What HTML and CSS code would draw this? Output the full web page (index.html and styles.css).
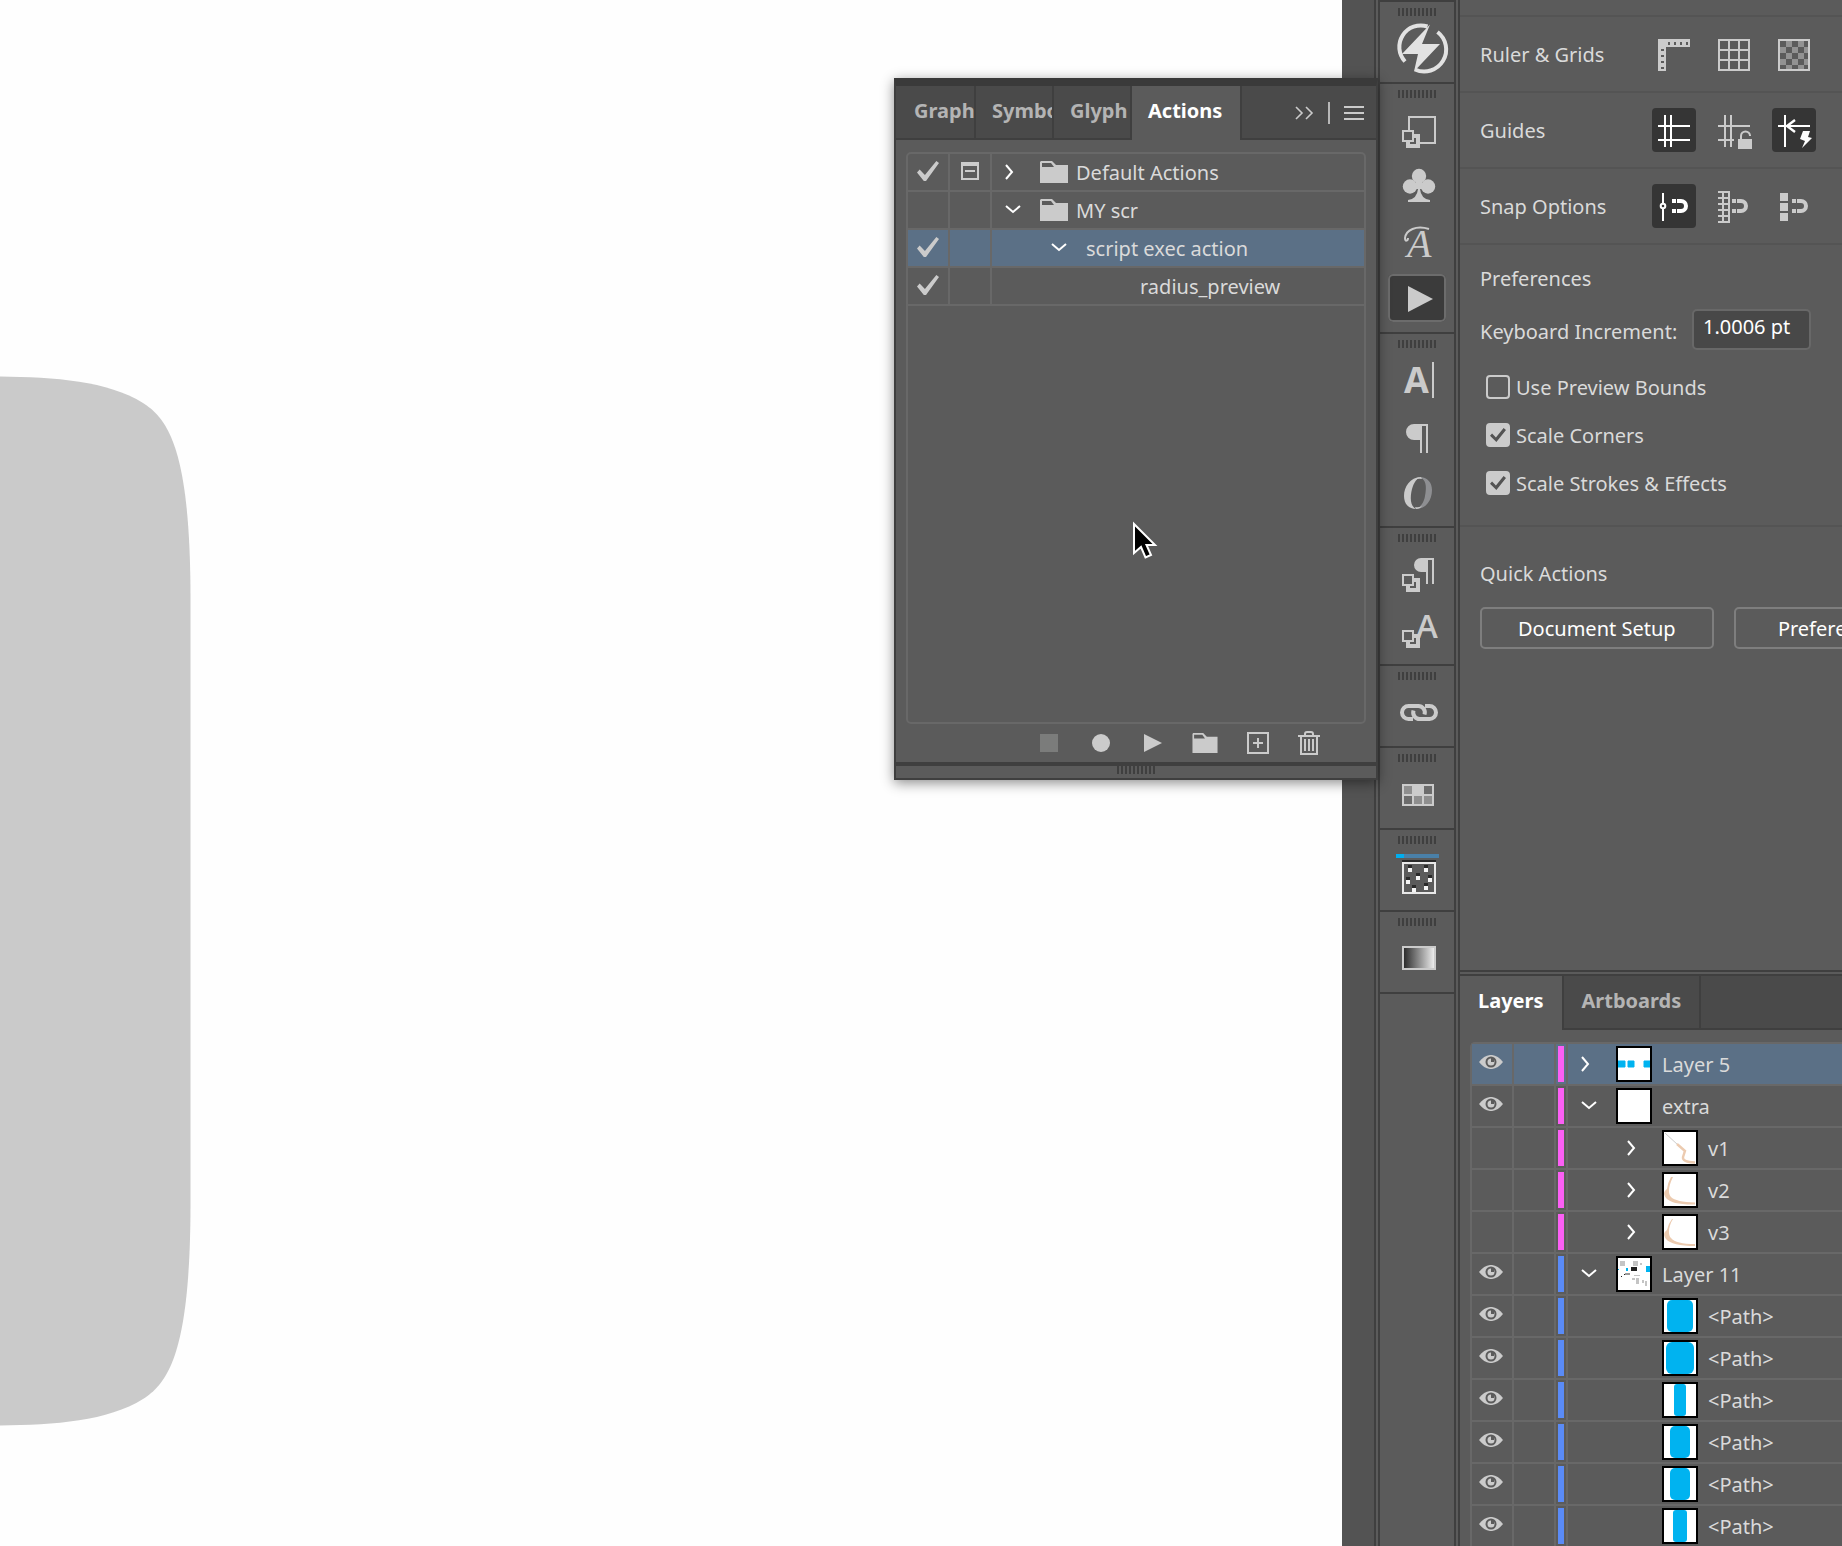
FILE: index.html
```html
<!DOCTYPE html>
<html lang="en">
<head>
  <meta charset="UTF-8" />
  <meta name="viewport" content="width=device-width, initial-scale=1.0"/>
  <title>Actions</title>
  <link rel="stylesheet" href="styles.css">
</head>
<body>

<!-- shared icons -->
<svg class="sprite" aria-hidden="true">
  <symbol id="right" viewBox="0 0 48 36"><path d="M14 11l6 7-6 7" fill="none" stroke="#fff" stroke-width="2"/></symbol>
  <symbol id="down" viewBox="0 0 48 36"><path d="M14 14l7 6 7-6" fill="none" stroke="#fff" stroke-width="2"/></symbol>
  <symbol id="folder" viewBox="0 0 28 22"><path fill-rule="evenodd" d="M1 0H12L16 4H28V22H0V1zM2 2V6H14L11 2z"/></symbol>
  <symbol id="eye" viewBox="0 0 24 14">
    <path d="M0 7C7-2.4 17-2.4 24 7C17 16.400 7 16.400 0 7z"/>
    <circle cx="12" cy="7" r="5.500" fill="#5b5b5b"/><circle cx="12" cy="7" r="3.500"/><path d="M12 7V3h3v4z" fill="#5b5b5b"/>
  </symbol>
  <symbol id="grip" viewBox="0 0 38 8"><path d="M1 0v8M5 0v8M9 0v8M13 0v8M17 0v8M21 0v8M25 0v8M29 0v8M33 0v8M37 0v8" stroke="#3f3f3f" stroke-width="2"/></symbol>
  <symbol id="squares" viewBox="0 0 58 48">
    <rect x="20" y="30" width="10" height="10" fill="#5b5b5b" stroke="#cbcbcb" stroke-width="4"/>
    <rect x="15" y="25" width="10" height="10" fill="#5b5b5b" stroke="#cbcbcb" stroke-width="2"/>
  </symbol>
  <symbol id="magnet" viewBox="0 0 44 44">
    <path d="M25 17h4a5 5 0 0 1 0 10h-4" fill="none" stroke="currentColor" stroke-width="4"/>
    <path d="M20 15h4v4h-4zM20 25h4v4h-4z"/>
  </symbol>
</svg>

<div class="app">

  <main class="canvas">
    <svg class="artwork" width="192" height="1546" aria-hidden="true">
      <path d="M0 376.500C55 377 108 381 143 403C170 420 190.500 455 190.500 600V1202C190.500 1347 170 1382 143 1399C108 1421 55 1425 0 1425.500z" fill="#cacaca"/>
    </svg>
  </main>
  <div class="gutter"></div>
  <div class="splitter"></div>

  <nav class="dock">
    <div class="dock-group">
      <svg class="grip"><use href="#grip"/></svg>
      <button aria-label="Plugin"><svg viewBox="0 0 58 48">
        <path d="M17 37.500A21.500 21.500 0 0 1 39.500 2.500M27 45.500A22 22 0 0 0 49.500 8" fill="none" stroke="#e2e2e2" stroke-width="4"/>
        <path d="M42 .5L34 20H52L26 47.500 30 30H14z" fill="#e2e2e2"/>
      </svg></button>
    </div>
    <div class="dock-group">
      <svg class="grip"><use href="#grip"/></svg>
      <button aria-label="Graphic Styles"><svg viewBox="0 0 58 48">
        <path d="M21 11h26v26H21z" class="line"/>
        <use href="#squares"/>
      </svg></button>
      <button aria-label="Symbols"><svg viewBox="0 0 58 48">
        <circle cx="31" cy="14" r="7.200"/><circle cx="22" cy="24.500" r="7.200"/><circle cx="40" cy="24.500" r="7.200"/>
        <path d="M28 19h6v8h-2q1 10 10 11v2H20v-2q9-1 10-11h-2z"/>
      </svg></button>
      <button aria-label="Glyphs"><svg viewBox="0 0 58 48">
        <text x="19" y="39" class="glyph-script">A</text>
        <path d="M41 11C28 7 18 12 17 20C17 24 20 23 20 20" class="line"/>
      </svg></button>
      <button class="active" aria-label="Actions"><svg viewBox="0 0 58 48"><path d="M20 12l25 13-25 13z"/></svg></button>
    </div>
    <div class="dock-group">
      <svg class="grip"><use href="#grip"/></svg>
      <button aria-label="Character"><svg viewBox="0 0 58 48">
        <text x="16" y="37" class="glyph-bold">A</text><path d="M44 6h2v36h-2z"/>
      </svg></button>
      <button aria-label="Paragraph"><svg viewBox="0 0 58 48">
        <path d="M26 12H40V41H38V14H34V41H32V28H26A8 8 0 0 1 26 12z"/>
      </svg></button>
      <button aria-label="OpenType"><svg viewBox="0 0 58 48">
        <path d="M33 9C22 9 16 19 16 28C16 36 21 41 28 41C22 38 22 29 24 21C26 14 29 10 33 9z"/>
        <path d="M31 9C40 9 44 15 44 22C44 32 38 41 28 41C33 39 36 34 37 28C39 18 38 11 31 9z" fill="#8e8f92"/>
        <path d="M33 9q-4 0-6 3 3-2 7-1zM28 41q4 0 6-3-3 2-7 1z"/>
      </svg></button>
    </div>
    <div class="dock-group">
      <svg class="grip"><use href="#grip"/></svg>
      <button aria-label="Paragraph Styles"><svg viewBox="0 0 58 48">
        <path d="M33 8H46V34H44V10H40V34H38V22H33A7 7 0 0 1 33 8z"/><use href="#squares"/>
      </svg></button>
      <button aria-label="Character Styles"><svg viewBox="0 0 58 48">
        <text x="28" y="32" class="glyph-regular">A</text><use href="#squares"/>
      </svg></button>
    </div>
    <div class="dock-group">
      <svg class="grip"><use href="#grip"/></svg>
      <button aria-label="Links"><svg viewBox="0 0 58 48">
        <path d="M25 31H20.500a6.500 6.500 0 0 1 0-13H30a6.500 6.500 0 0 1 6.500 8.500M37 18H41.500a6.500 6.500 0 0 1 0 13H32a6.500 6.500 0 0 1-6.500-8.500" class="line thick"/>
      </svg></button>
    </div>
    <div class="dock-group">
      <svg class="grip"><use href="#grip"/></svg>
      <button aria-label="Swatches"><svg viewBox="0 0 58 48">
        <rect x="14" y="14" width="32" height="22"/>
        <path d="M16 16h8v8h-8zM26 26h8v8h-8zM36 26h8v8h-8z" fill="#8e8e8e"/>
        <path d="M36 16h8v8h-8zM16 26h8v8h-8z" fill="#6c6c6c"/>
      </svg></button>
    </div>
    <div class="dock-group">
      <svg class="grip"><use href="#grip"/></svg>
      <button aria-label="Scatter"><svg viewBox="0 0 58 48">
        <path d="M8 2h43v4H8z" fill="#4a80a8"/><path d="M8 2h8v4H8z" fill="#00aeef"/>
        <path d="M14 8h34v2H14zM20 13h4v3h-4zM36 13h4v3h-4zM28 21h4v3h-4zM18 25h4v3h-4zM40 23h4v3h-4zM24 33h4v3h-4zM36 31h4v3h-4z" fill="#2a2a2a"/>
        <rect x="15" y="11" width="32" height="30" fill="none" stroke="#e8e8e8" stroke-width="2"/>
        <path d="M20 16h4v4h-4zM36 16h4v4h-4zM28 24h4v4h-4zM18 28h4v4h-4zM40 26h4v4h-4zM24 36h4v4h-4zM36 34h4v4h-4z" fill="#f4f4f4"/>
      </svg></button>
    </div>
    <div class="dock-group">
      <svg class="grip"><use href="#grip"/></svg>
      <button aria-label="Gradient"><svg viewBox="0 0 58 48">
        <defs><linearGradient id="ramp"><stop offset="0" stop-color="#262626"/><stop offset="1" stop-color="#f2f2f2"/></linearGradient></defs>
        <rect x="15" y="13" width="32" height="22" fill="url(#ramp)" stroke="#cbcbcb" stroke-width="2"/>
      </svg></button>
    </div>
  </nav>
  <div class="splitter"></div>

  <aside class="sidebar">
    <section class="properties">
      <div class="prop-top"></div>
      <div class="prop-row">
        <span>Ruler &amp; Grids</span>
        <div class="tools">
          <button aria-label="Show rulers"><svg viewBox="0 0 44 44"><path fill-rule="evenodd" d="M6 7H38V15H14V39H6zM16 10v3h2v-3zM22 10v3h2v-3zM28 10v3h2v-3zM34 10v3h2v-3zM9 17v2h3v-2zM9 23v2h3v-2zM9 29v2h3v-2zM9 35v2h3v-2z"/></svg></button>
          <button aria-label="Show grid"><svg viewBox="0 0 44 44"><path d="M7 8h30v30H7zM17 8v30M27 8v30M7 18h30M7 28h30" class="line"/></svg></button>
          <button aria-label="Show transparency grid"><svg viewBox="0 0 44 44">
            <defs><pattern id="checks" x="8" y="9" width="12" height="12" patternUnits="userSpaceOnUse"><path d="M6 0h6v6H6zM0 6h6v6H0z" fill="#929292"/></pattern></defs>
            <rect x="7" y="8" width="30" height="30" fill="url(#checks)" stroke="#cbcbcb" stroke-width="2"/>
          </svg></button>
        </div>
      </div>
      <div class="prop-row">
        <span>Guides</span>
        <div class="tools">
          <button class="active" aria-label="Show guides"><svg viewBox="0 0 44 44"><path d="M12 7h2v32h-2zM18 7h2v32h-2zM6 17h32v2H6zM6 31h32v2H6z"/></svg></button>
          <button aria-label="Lock guides"><svg viewBox="0 0 44 44">
            <path d="M12 7h2v32h-2zM18 7h2v32h-2zM6 17h32v2H6zM6 31h16v2H6zM26 31h14v10H26z"/>
            <path d="M29 31v-3a4.500 4.500 0 0 1 9 0v-1" class="line"/>
          </svg></button>
          <button class="active" aria-label="Smart guides"><svg viewBox="0 0 44 44">
            <path d="M12 7h2v32h-2zM6 17h32v2H6zM31 23h7l-2 6 4 1-10 10 3-7-5-2z"/>
            <path d="M23 12l-8 6 8 6" fill="none" stroke="#fff" stroke-width="2.400"/>
          </svg></button>
        </div>
      </div>
      <div class="prop-row">
        <span>Snap Options</span>
        <div class="tools">
          <button class="active" aria-label="Snap to point"><svg viewBox="0 0 44 44"><path d="M10 9h2v10h-2zM10 25h2v12h-2z"/><circle cx="11" cy="22" r="2.300" fill="none" stroke="#fff" stroke-width="2"/><use href="#magnet"/></svg></button>
          <button aria-label="Snap to grid"><svg viewBox="0 0 44 44"><path d="M11 8v30M17 7v32M6 8h12M6 14h12M6 20h12M6 26h12M6 32h12M6 38h12" class="line"/><use href="#magnet"/></svg></button>
          <button aria-label="Snap to pixel"><svg viewBox="0 0 44 44"><path d="M8 9h8v8H8zM8 19h8v8H8zM8 29h8v8H8z"/><use href="#magnet"/></svg></button>
        </div>
      </div>

      <div class="preferences">
        <h2>Preferences</h2>
        <div class="increment">
          <label for="increment">Keyboard Increment:</label>
          <input type="text" id="increment" value="1.0006 pt">
        </div>
        <div class="checks">
          <label><input type="checkbox"> <span>Use Preview Bounds</span></label>
          <label><input type="checkbox" checked> <span>Scale Corners</span></label>
          <label><input type="checkbox" checked> <span>Scale Strokes &amp; Effects</span></label>
        </div>
      </div>

      <div class="quick">
        <h2>Quick Actions</h2>
        <div class="quick-buttons">
          <button>Document Setup</button>
          <button>Preferences</button>
        </div>
      </div>
    </section>

    <div class="splitter-h"></div>

    <section class="layers">
      <div class="tabs">
        <button class="tab active">Layers</button>
        <button class="tab">Artboards</button>
      </div>
      <div class="layer-list">
        <div class="layer selected">
          <button class="see" aria-label="Visibility"><svg><use href="#eye"/></svg></button><span class="lock"></span><span class="color pink"></span>
          <button class="toggle" aria-label="Expand"><svg><use href="#right"/></svg></button>
          <svg class="thumb" viewBox="0 0 32 32"><path d="M0 13h7v6H0zM10 13h6v6h-6zM26 13h6v6h-6z" fill="#00b3f0" stroke="#00b3f0" stroke-linejoin="round"/></svg>
          <span class="name">Layer 5</span>
        </div>
        <div class="layer">
          <button class="see" aria-label="Visibility"><svg><use href="#eye"/></svg></button><span class="lock"></span><span class="color pink"></span>
          <button class="toggle" aria-label="Collapse"><svg><use href="#down"/></svg></button>
          <svg class="thumb" viewBox="0 0 32 32"></svg>
          <span class="name">extra</span>
        </div>
        <div class="layer nested">
          <button class="see" aria-label="Visibility"></button><span class="lock"></span><span class="color pink"></span>
          <button class="toggle" aria-label="Expand"><svg><use href="#right"/></svg></button>
          <svg class="thumb" viewBox="0 0 32 32"><path d="M1 1l13 12" stroke="#ccc" fill="none"/><path d="M13 12l8 7-2 6q-1 5 12 5.500" stroke="#eccbb0" stroke-width="2.400" fill="none"/></svg>
          <span class="name">v1</span>
        </div>
        <div class="layer nested">
          <button class="see" aria-label="Visibility"></button><span class="lock"></span><span class="color pink"></span>
          <button class="toggle" aria-label="Expand"><svg><use href="#right"/></svg></button>
          <svg class="thumb" viewBox="0 0 32 32"><path d="M7 3H9C4 13 4 20 7 23Q12 28 31 28.500V30.500Q8 31 2 24C-1 20 0 17 3 15Q4 8 7 3z" fill="#eccbb0"/></svg>
          <span class="name">v2</span>
        </div>
        <div class="layer nested">
          <button class="see" aria-label="Visibility"></button><span class="lock"></span><span class="color pink"></span>
          <button class="toggle" aria-label="Expand"><svg><use href="#right"/></svg></button>
          <svg class="thumb" viewBox="0 0 32 32"><path d="M8 3H9C4 11 4 19 7 22Q12 28 31 28V30Q8 30 2 23C-1 19 0 16 3 14Q4 8 8 3z" fill="#eccbb0"/></svg>
          <span class="name">v3</span>
        </div>
        <div class="layer">
          <button class="see" aria-label="Visibility"><svg><use href="#eye"/></svg></button><span class="lock"></span><span class="color blue"></span>
          <button class="toggle" aria-label="Collapse"><svg><use href="#down"/></svg></button>
          <svg class="thumb" viewBox="0 0 32 32">
            <path d="M2 3h5v5H2zM15 3h5v5h-5zM22 5h2v2h-2zM14 20h3v2h-3zM18 20h3v6h-3zM24 22h2v3h-2zM27 23h2v5h-2zM16 17h6v1h-6z" fill="#c4c4c4"/>
            <path d="M13 9h6v4h-6zM6 16h2v1H6zM10 15h2v1h-2zM3 18h1v1H3z" fill="#222"/><path d="M28 8h4v6h-4zM8 10h2v3H8zM0 11h1v1H0z" fill="#00b3f0"/><path d="M7 15h5v2H7z" fill="#999"/>
          </svg>
          <span class="name">Layer 11</span>
        </div>
        <div class="layer nested">
          <button class="see" aria-label="Visibility"><svg><use href="#eye"/></svg></button><span class="lock"></span><span class="color blue"></span><span class="toggle"></span>
          <svg class="thumb" viewBox="0 0 32 32"><rect x="3" y="0" width="26" height="32" rx="5" fill="#00b3f0"/></svg>
          <span class="name">&lt;Path&gt;</span>
        </div>
        <div class="layer nested">
          <button class="see" aria-label="Visibility"><svg><use href="#eye"/></svg></button><span class="lock"></span><span class="color blue"></span><span class="toggle"></span>
          <svg class="thumb" viewBox="0 0 32 32"><rect x="2" y="0" width="28" height="32" rx="6" fill="#00b3f0"/></svg>
          <span class="name">&lt;Path&gt;</span>
        </div>
        <div class="layer nested">
          <button class="see" aria-label="Visibility"><svg><use href="#eye"/></svg></button><span class="lock"></span><span class="color blue"></span><span class="toggle"></span>
          <svg class="thumb" viewBox="0 0 32 32"><rect x="10" y="0" width="12" height="32" rx="3" fill="#00b3f0"/></svg>
          <span class="name">&lt;Path&gt;</span>
        </div>
        <div class="layer nested">
          <button class="see" aria-label="Visibility"><svg><use href="#eye"/></svg></button><span class="lock"></span><span class="color blue"></span><span class="toggle"></span>
          <svg class="thumb" viewBox="0 0 32 32"><rect x="6" y="0" width="20" height="32" rx="5" fill="#00b3f0"/></svg>
          <span class="name">&lt;Path&gt;</span>
        </div>
        <div class="layer nested">
          <button class="see" aria-label="Visibility"><svg><use href="#eye"/></svg></button><span class="lock"></span><span class="color blue"></span><span class="toggle"></span>
          <svg class="thumb" viewBox="0 0 32 32"><rect x="6" y="0" width="20" height="32" rx="5" fill="#00b3f0"/></svg>
          <span class="name">&lt;Path&gt;</span>
        </div>
        <div class="layer nested">
          <button class="see" aria-label="Visibility"><svg><use href="#eye"/></svg></button><span class="lock"></span><span class="color blue"></span><span class="toggle"></span>
          <svg class="thumb" viewBox="0 0 32 32"><rect x="9" y="0" width="14" height="32" rx="3" fill="#00b3f0"/></svg>
          <span class="name">&lt;Path&gt;</span>
        </div>
      </div>
    </section>
  </aside>

  <!-- floating panel -->
  <section class="panel">
    <div class="tabs">
      <button class="tab short first">Graph</button>
      <button class="tab short">Symbo</button>
      <button class="tab short">Glyph</button>
      <button class="tab active">Actions</button>
      <div class="panel-menu">
        <button aria-label="Collapse panel"><svg width="20" height="14" viewBox="0 0 20 14"><path d="M2 1l6 6-6 6M12 1l6 6-6 6" fill="none" stroke="#cbcbcb" stroke-width="1.600"/></svg></button>
        <span class="divider"></span>
        <button aria-label="Panel menu"><svg width="20" height="14" viewBox="0 0 20 14"><path d="M0 0h20v2H0zM0 6h20v2H0zM0 12h20v2H0z"/></svg></button>
      </div>
    </div>

    <div class="action-list">
      <div class="action">
        <label class="cell"><input type="checkbox" checked aria-label="Toggle Default Actions"></label>
        <button class="cell" aria-label="Toggle dialog"><svg width="18" height="18" viewBox="0 0 18 18"><path fill-rule="evenodd" d="M0 0H18V18H0zM2 4V16H16V4zM4 8H14V10H4z"/></svg></button>
        <button class="toggle" aria-label="Expand"><svg><use href="#right"/></svg></button>
        <svg class="folder"><use href="#folder"/></svg>
        <span class="name">Default Actions</span>
      </div>
      <div class="action">
        <label class="cell"><input type="checkbox" aria-label="Toggle MY scr"></label>
        <span class="cell"></span>
        <button class="toggle" aria-label="Collapse"><svg><use href="#down"/></svg></button>
        <svg class="folder"><use href="#folder"/></svg>
        <span class="name">MY scr</span>
      </div>
      <div class="action selected">
        <label class="cell"><input type="checkbox" checked aria-label="Toggle script exec action"></label>
        <span class="cell"></span>
        <button class="toggle depth-1" aria-label="Collapse"><svg><use href="#down"/></svg></button>
        <span class="name">script exec action</span>
      </div>
      <div class="action">
        <label class="cell"><input type="checkbox" checked aria-label="Toggle radius_preview"></label>
        <span class="cell"></span>
        <span class="name depth-2">radius_preview</span>
      </div>
    </div>

    <div class="panel-footer">
      <button disabled aria-label="Stop"><svg width="18" height="18"><path d="M0 0h18v18H0z" fill="#7b7c7b"/></svg></button>
      <button aria-label="Record"><svg width="18" height="18"><circle cx="9" cy="9" r="9"/></svg></button>
      <button aria-label="Play"><svg width="18" height="18"><path d="M0 0l18 9-18 9z"/></svg></button>
      <button aria-label="New set"><svg width="26" height="20" viewBox="0 0 28 22"><use href="#folder"/></svg></button>
      <button aria-label="New action"><svg width="22" height="22" viewBox="-1 0 22 22"><path d="M1 1h20v20H1zM11 6v10M6 11h10" class="line"/></svg></button>
      <button aria-label="Delete"><svg width="22" height="24"><path d="M0 5h22M3 5v18h16V5M7 5V3q0-2 2-2h4q2 0 2 2v2M7 8v12M11 8v12M15 8v12" class="line"/></svg></button>
    </div>
    <div class="resize"><svg class="grip"><use href="#grip"/></svg></div>
  </section>

  <svg class="cursor" width="26" height="38" viewBox="0 0 26 38" aria-hidden="true">
    <path d="M2 3V32L9 26L13.500 36.500L19 34L14.500 24H23z" fill="#000" stroke="#fff" stroke-width="2"/>
  </svg>
</div>

</body>
</html>
```
FILE: styles.css
```css
* {
  box-sizing: border-box;
}

body {
  margin: 0;
  height: 100vh;
  overflow: hidden;
  font-family: 'Noto Sans', sans-serif;
  font-size: 20px;
  line-height: 28px;
  color: #dadada;
  background: #5b5b5b;
}

button {
  font: inherit;
  color: inherit;
  background: none;
  border: none;
  padding: 0;
  cursor: pointer;
}

svg {
  display: block;
  fill: #cbcbcb;
  overflow: visible;
}

.line {
  fill: none;
  stroke: #cbcbcb;
  stroke-width: 2;
}

.thick {
  stroke-width: 4;
}

h2 {
  margin: 0;
  font-size: 20px;
  font-weight: normal;
  line-height: 30px;
}

.sprite {
  position: absolute;
  width: 0;
  height: 0;
}

.app {
  display: flex;
  height: 100vh;
}

.canvas {
  flex: 1;
  background: #fefefe;
  overflow: hidden;
}

.gutter {
  width: 32px;
  background: #535353;
}

.splitter {
  width: 6px;
  border-left: 2px solid #3f3f3f;
  border-right: 2px solid #3f3f3f;
}

.splitter-h {
  height: 6px;
  border-top: 2px solid #3f3f3f;
  border-bottom: 2px solid #3f3f3f;
}

/* icon dock */

.dock {
  width: 74px;
}

.dock-group {
  display: flex;
  flex-direction: column;
  align-items: center;
  gap: 8px;
  padding: 6px 0 10px;
  border-top: 2px solid #3f3f3f;
}

.dock-group:last-child {
  border-bottom: 2px solid #3f3f3f;
}

.grip {
  width: 38px;
  height: 8px;
}

.dock-group button {
  width: 58px;
  height: 48px;
  border-radius: 5px;
}

.dock-group button.active {
  background: #3b3b3b;
  box-shadow: inset 0 0 0 2px #6c6c6c;
}

.dock-group button svg {
  width: 58px;
  height: 48px;
}

.glyph-script {
  font: italic 40px 'Liberation Serif', serif;
}

.glyph-bold {
  font: bold 36px 'Open Sans', sans-serif;
}

.glyph-regular {
  font: 600 33px 'Open Sans', sans-serif;
}

/* sidebar */

.sidebar {
  width: 382px;
  display: flex;
  flex-direction: column;
  overflow: hidden;
}

.properties {
  flex: 1;
}

.prop-top {
  height: 17px;
  border-bottom: 2px solid #545454;
}

.prop-row {
  display: flex;
  align-items: center;
  justify-content: space-between;
  height: 76px;
  padding: 0 26px 0 20px;
  border-bottom: 2px solid #545454;
}

.prop-row span,
.checks span,
.name {
  padding-top: 2px;
}

.tools {
  display: flex;
  gap: 16px;
}

.tools button {
  width: 44px;
  height: 44px;
  border-radius: 4px;
  color: #cbcbcb;
}

.tools button.active {
  background: #353535;
  color: #fff;
}

.tools button.active svg {
  fill: #fff;
}

.tools svg {
  width: 44px;
  height: 44px;
}

.preferences {
  padding: 19px 20px 30px;
  border-bottom: 2px solid #545454;
}

.increment {
  display: flex;
  align-items: center;
  gap: 10px;
  margin: 15px 0 25px;
}

.increment label {
  width: 202px;
  padding-top: 4px;
  white-space: nowrap;
}

.increment input {
  width: 119px;
  height: 41px;
  padding: 0 9px 6px;
  font: inherit;
  color: #fff;
  background: #484848;
  border: 2px solid #686868;
  border-radius: 5px;
}

.checks {
  display: flex;
  flex-direction: column;
  gap: 24px;
  padding-left: 6px;
}

.checks label {
  display: flex;
  align-items: center;
  gap: 6px;
  height: 24px;
}

.checks input {
  appearance: none;
  width: 24px;
  height: 24px;
  margin: 0;
  border: 2px solid #cbcbcb;
  border-radius: 4px;
}

.checks input:checked {
  background: #cbcbcb;
}

.checks input:checked::before {
  content: '';
  display: block;
  width: 16px;
  height: 14px;
  margin: 3px 2px;
  background: #535353;
  clip-path: polygon(0 55%, 13% 40%, 37% 67%, 85% 0, 100% 14%, 40% 100%);
}

.quick {
  padding: 32px 20px;
}

.quick-buttons {
  display: flex;
  gap: 20px;
  margin-top: 18px;
}

.quick-buttons button {
  flex: none;
  height: 42px;
  min-width: 200px;
  padding: 2px 36px 0;
  color: #fff;
  border: 2px solid #7e7e7e;
  border-radius: 5px;
}

/* tabs */

.tabs {
  display: flex;
  height: 54px;
  background: linear-gradient(#3f3f3f, #3f3f3f) bottom / 100% 2px no-repeat #4a4a4a;
}

.tab {
  flex: none;
  padding: 0 18px 4px 16px;
  font-weight: bold;
  color: #b4b4b4;
  text-align: left;
  overflow: hidden;
  border-right: 2px solid #3f3f3f;
}

.tab.active {
  color: #fff;
  background: #5b5b5b;
}

.tab.short {
  width: 78px;
  padding-right: 0;
}

.tab.first {
  width: 80px;
  padding-left: 18px;
}

/* layers */

.layers .tab {
  padding-left: 18px;
}

.layer-list {
  margin: 12px 0 0 10px;
  border: 2px solid #686868;
  border-width: 2px 0 0 2px;
  border-radius: 5px 0 0;
}

.layer {
  display: flex;
  align-items: center;
  height: 42px;
  border-bottom: 2px solid #686868;
}

.layer:last-child {
  height: 40px;
  border-bottom: none;
}

.selected {
  background: #5b7086;
}

.see,
.lock {
  width: 42px;
  height: 40px;
  border-right: 2px solid #686868;
}

.see svg {
  width: 24px;
  height: 14px;
  margin: 0 0 4px 7px;
}

.color {
  width: 12px;
  height: 40px;
  padding: 2px;
  border-right: 2px solid #686868;
}

.color::before {
  content: '';
  display: block;
  width: 6px;
  height: 36px;
}

.pink::before {
  background: #fb5ff5;
}

.blue::before {
  background: #5a8bf7;
}

.toggle {
  width: 48px;
  height: 36px;
}

.toggle svg {
  width: 48px;
  height: 36px;
}

.layer .toggle {
  padding-bottom: 2px;
}

.nested .toggle {
  margin-left: 46px;
}

.thumb {
  width: 36px;
  height: 36px;
  margin-right: 10px;
  border: 2px solid #000;
  background: #fff;
  overflow: hidden;
}

/* floating panel */

.panel {
  position: absolute;
  top: 78px;
  right: 464px;
  width: 484px;
  background: #5b5b5b;
  border: 2px solid #3f3f3f;
  border-top: 8px solid #3a3a3a;
  box-shadow: 0 3px 12px rgba(0, 0, 0, 0.45);
}

.panel-menu {
  display: flex;
  align-items: center;
  gap: 14px;
  margin-left: auto;
  padding: 0 12px 0 0;
}

.divider {
  width: 2px;
  height: 22px;
  background: #b8b8b8;
}

.action-list {
  height: 572px;
  margin: 12px 10px 0;
  border: 2px solid #686868;
  border-radius: 5px;
}

.action {
  display: flex;
  align-items: center;
  height: 38px;
  border-bottom: 2px solid #686868;
}

.cell {
  display: flex;
  align-items: center;
  justify-content: center;
  width: 42px;
  height: 36px;
  padding-bottom: 2px;
  border-right: 2px solid #686868;
}

.cell input {
  appearance: none;
  width: 22px;
  height: 20px;
  margin: 0;
}

.cell input:checked {
  background: #cbcbcb;
  clip-path: polygon(0 57%, 12% 43%, 36% 70%, 88% 0, 100% 10%, 41% 100%, 31% 100%);
}

.folder {
  width: 28px;
  height: 22px;
  margin-right: 8px;
}

.depth-1 {
  margin-left: 46px;
}

.depth-2 {
  margin-left: 148px;
}

.panel-footer {
  display: flex;
  justify-content: flex-end;
  align-items: center;
  height: 38px;
  padding-right: 41px;
}

.panel-footer button {
  display: flex;
  justify-content: center;
  width: 52px;
}

.resize {
  display: flex;
  justify-content: center;
  height: 16px;
  border-top: 4px solid #3f3f3f;
}

.cursor {
  position: absolute;
  left: 1132px;
  top: 521px;
}
```
